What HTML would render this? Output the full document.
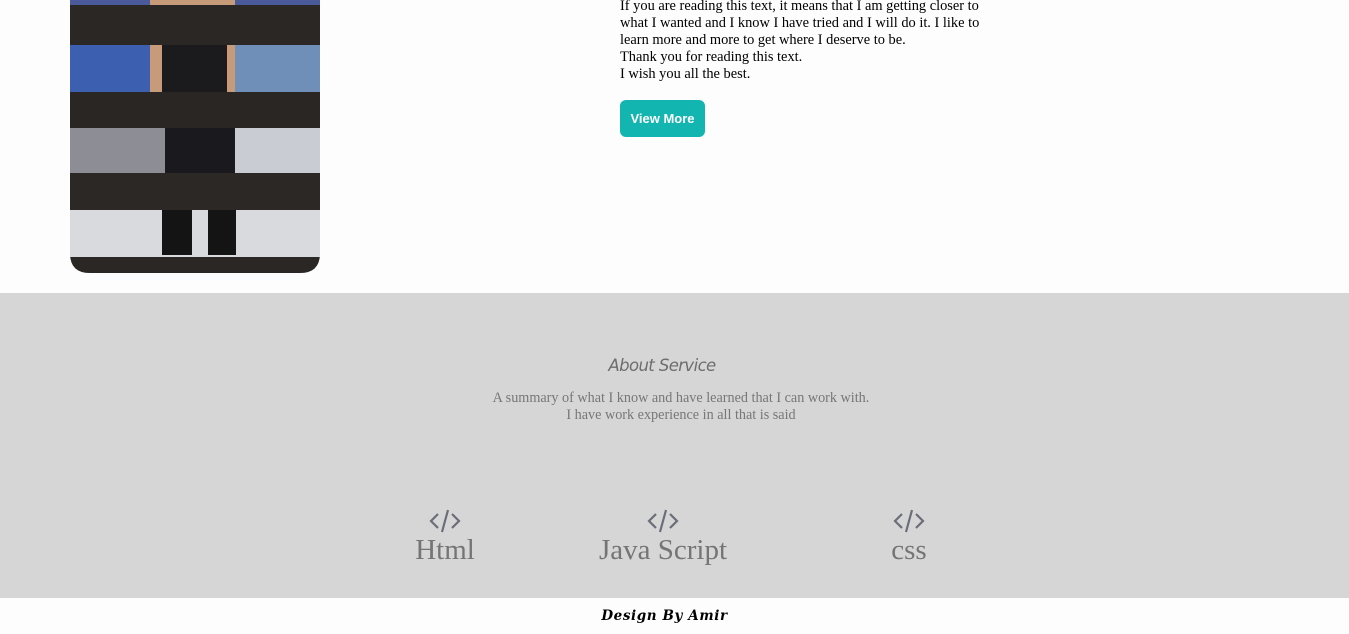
<!DOCTYPE html>
<html><head><meta charset="utf-8"><style>
html,body{margin:0;padding:0;background:#fdfdfd;width:1349px;height:634px;overflow:hidden;position:relative}
.abs{position:absolute}
.txt{left:620px;top:-2px;font:14.4px/17px "Liberation Serif",serif;color:#000;width:372px}
.btn{left:620px;top:100px;width:85px;height:37px;background:#12b5b0;border-radius:6px;color:#fff;font:bold 13px/37px "Liberation Sans",Arial,sans-serif;text-align:center}
.gray{left:0;top:293px;width:1349px;height:305px;background:#d6d6d6}
.h{left:0;width:1324px;top:355px;text-align:center;font:italic 16.5px/22px "DejaVu Sans",sans-serif;color:#6d6d6d;letter-spacing:-0.6px}
.sum{left:0;width:1362px;top:390px;text-align:center;font:14.2px/17px "Liberation Serif",serif;color:#777}
.item{top:509px;text-align:center;color:#757575;font:29px/34px "Liberation Serif",serif;width:200px}
.item svg{display:block;margin:0 auto 0}
.foot{left:0;width:1329px;top:606px;text-align:center;font:italic bold 13.5px/20px "DejaVu Serif",serif;color:#000;letter-spacing:0.6px}
</style></head><body>
<svg class="abs" style="left:70px;top:0" width="250" height="273" viewBox="0 0 250 273">
<defs><clipPath id="c"><path d="M0 0H250V253Q250 273 230 273H20Q0 273 0 253Z"/></clipPath></defs>
<g clip-path="url(#c)">
<rect width="250" height="273" fill="#a9b4c4"/>
<rect y="0" width="250" height="95" fill="#4a5a9a"/>
<rect x="0" y="40" width="90" height="55" fill="#3d5fb0"/>
<rect x="160" y="40" width="90" height="55" fill="#6f8fb8"/>
<rect y="128" width="250" height="50" fill="#c9ccd2"/>
<rect x="0" y="128" width="100" height="48" fill="#8d8e95"/>
<rect y="210" width="250" height="50" fill="#d8dade"/>
<rect x="80" y="0" width="85" height="95" fill="#c79b7a"/>
<rect x="92" y="35" width="65" height="60" fill="#1b1b1d"/>
<rect x="95" y="128" width="70" height="50" fill="#1a1a1e"/>
<rect x="92" y="210" width="30" height="45" fill="#141414"/>
<rect x="138" y="210" width="28" height="45" fill="#141414"/>
<rect y="5" width="250" height="40" fill="#2b2725"/>
<rect y="92" width="250" height="36" fill="#2a2624"/>
<rect y="173" width="250" height="37" fill="#2c2826"/>
<rect y="257" width="250" height="16" fill="#2b2725"/>
</g></svg>
<div class="abs txt">If you are reading this text, it means that I am getting closer to what I wanted and I know I have tried and I will do it. I like to learn more and more to get where I deserve to be.<br>Thank you for reading this text.<br>I wish you all the best.</div>
<div class="abs btn">View More</div>
<div class="abs gray"></div>
<div class="abs h">About Service</div>
<div class="abs sum">A summary of what I know and have learned that I can work with.<br>I have work experience in all that is said</div>
<div class="abs item" style="left:345px"><svg width="32" height="24" viewBox="0 0 32 24" fill="none" stroke="#6b6e78" stroke-width="2.2"><path d="M9 5L2 12L9 19M23 5L30 12L23 19M19 1L13 23"/></svg>Html</div>
<div class="abs item" style="left:563px"><svg width="32" height="24" viewBox="0 0 32 24" fill="none" stroke="#6b6e78" stroke-width="2.2"><path d="M9 5L2 12L9 19M23 5L30 12L23 19M19 1L13 23"/></svg>Java Script</div>
<div class="abs item" style="left:809px"><svg width="32" height="24" viewBox="0 0 32 24" fill="none" stroke="#6b6e78" stroke-width="2.2"><path d="M9 5L2 12L9 19M23 5L30 12L23 19M19 1L13 23"/></svg>css</div>
<div class="abs foot">Design By Amir</div>
</body></html>
